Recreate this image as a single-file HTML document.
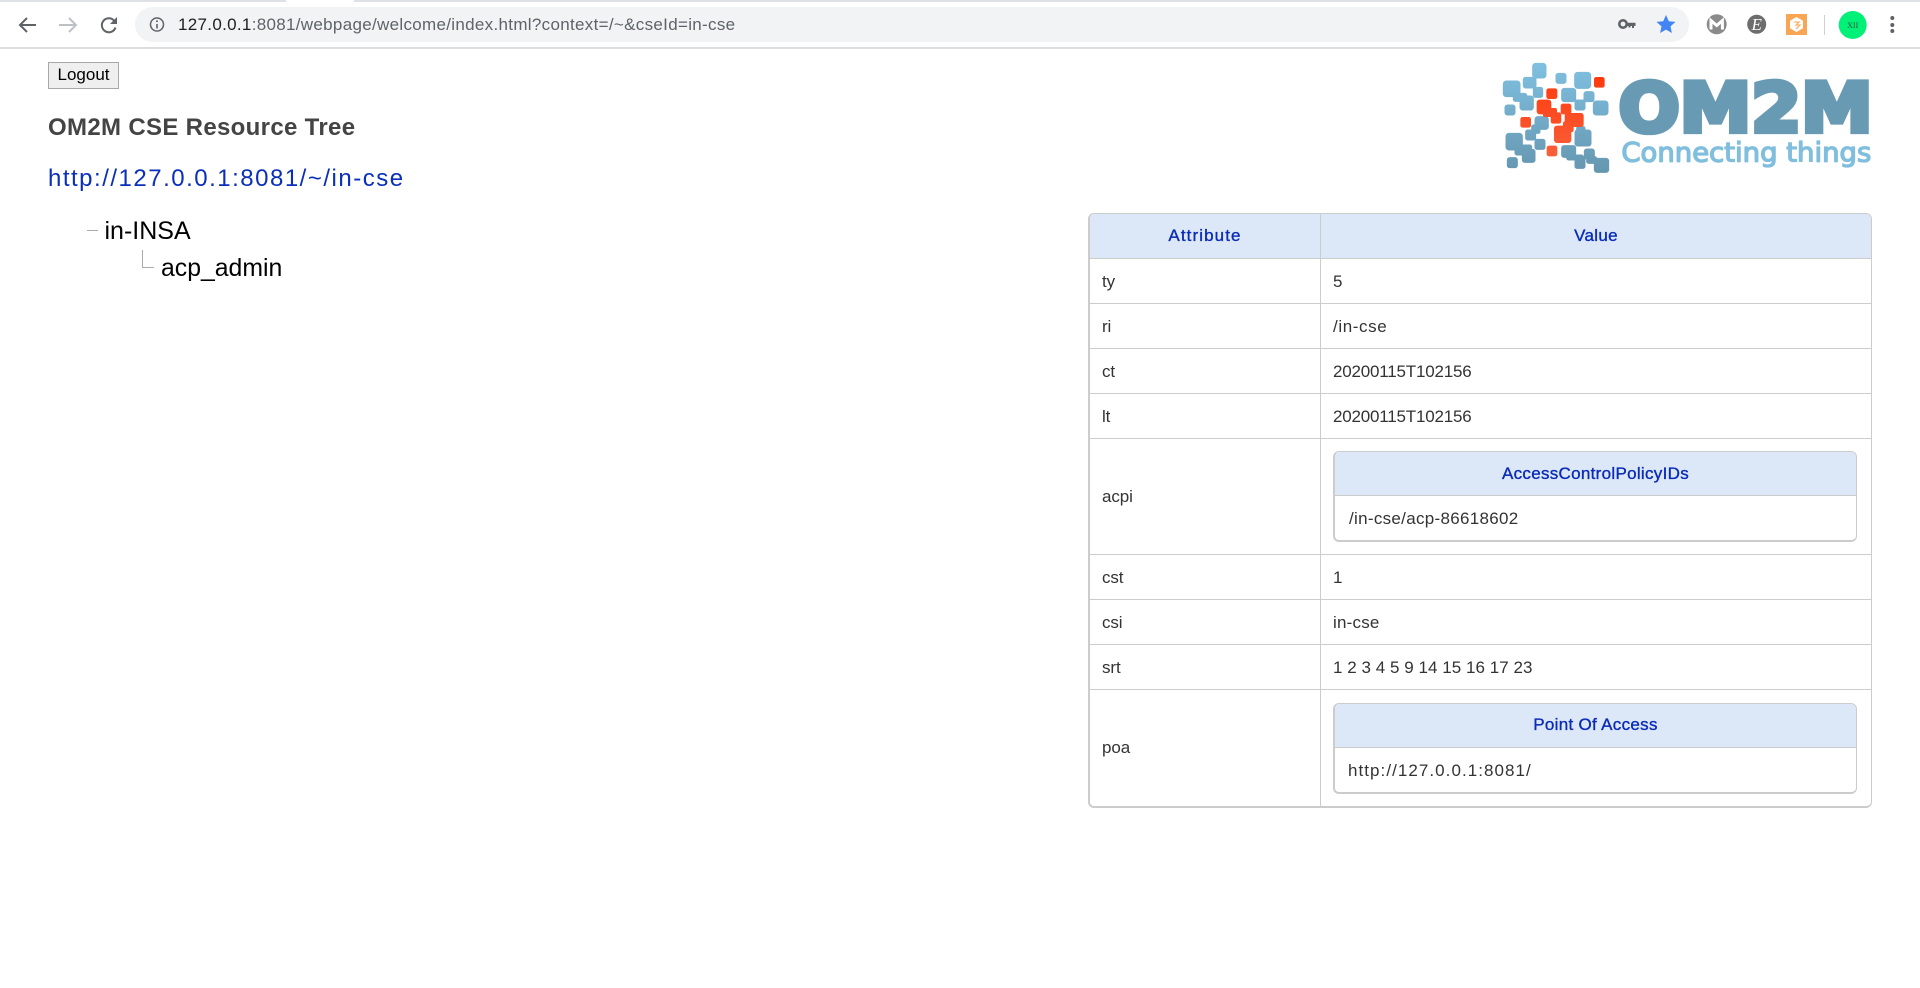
<!DOCTYPE html>
<html><head><meta charset="utf-8"><title>OM2M</title>
<style>
html,body{margin:0;padding:0;background:#fff;width:1920px;height:988px;overflow:hidden}
body{position:relative;font-family:"Liberation Sans",Arial,sans-serif;color:#333}
.a{position:absolute;white-space:nowrap}
#strip{left:0;top:0;width:1920px;height:2px;background:#dee1e6}
#tab{left:286px;top:0;width:68px;height:2px;background:#fff}
#line{left:0;top:47px;width:1920px;height:2px;background:#dcdde0}
#omni{left:135px;top:7px;width:1554px;height:35px;background:#f1f3f4;border-radius:18px}
#url{left:178px;top:15px;font-size:17px;line-height:20px;color:#5f6368;letter-spacing:.31px}
#url b{font-weight:normal;color:#202124}
#logout{left:48px;top:62px;width:71px;height:27px;box-sizing:border-box;background:#efefef;border:1px solid #a8a8a8;font:17px/22px "Liberation Sans",sans-serif;color:#000;padding:0 0 2px;text-align:center}
#h{left:48px;top:114px;font-size:24px;line-height:28px;font-weight:bold;color:#444;letter-spacing:.33px}
#lnk{left:48px;top:165px;font-size:24px;line-height:28px;color:#0a2fb8;text-decoration:none;letter-spacing:1.5px}
.tree{color:#000;font-size:25px;line-height:30px}
.t{border-collapse:separate;border-spacing:0;table-layout:fixed;background:#fff}
#tb{left:1088px;top:213px;width:784px;border:1px solid #ccc;border-left-width:2px;border-bottom-width:2px;border-right-width:1px;border-radius:6px}
.t td,.t th{box-sizing:border-box;height:45px;padding:2px 12px 0;font-size:17px;font-weight:normal;border-bottom:1px solid #ccc;border-right:1px solid #ccc;color:#333;letter-spacing:-.1px}
.t th{padding:0 12px;background:#dce8f8;color:#0a2bb8;text-align:center;-webkit-text-stroke:.35px #0a2bb8;letter-spacing:.3px}
.t td:last-child,.t th:last-child{border-right:0}
.t tr:last-child td{border-bottom:0}
.t th:first-child{border-top-left-radius:5px}
.t th:last-child{border-top-right-radius:5px}
.d{letter-spacing:-.2px!important}
.t td.big{height:116px;padding:0 14px 0 12px}
.t td.mid{padding-top:0}
.t .in{width:524px;border:1px solid #ccc;border-left-width:2px;border-bottom-width:2px;border-radius:6px}
.in th{height:44px;padding:0}
.in td{height:44px;padding:2px 0 0 13px}
</style></head>
<body>
<div class="a" id="strip"></div><div class="a" id="tab"></div><div class="a" id="line"></div>
<div class="a" id="omni"></div>

<svg class="a" style="left:0;top:0" width="200" height="48" viewBox="0 0 200 48" fill="none">
<path d="M36 25H20.5M27 18l-7 7 7 7" stroke="#5f6368" stroke-width="2"/>
<path d="M59 25h15.500M69 18l7 7-7 7" stroke="#bdc1c6" stroke-width="2"/>
<path d="M115.500 27.500A7 7 0 1 1 114 20.500" stroke="#5f6368" stroke-width="2"/>
<path d="M117 17v7h-7z" fill="#5f6368"/>
<circle cx="157" cy="24.500" r="6.500" stroke="#5f6368" stroke-width="1.500"/>
<path d="M157 24v4.500" stroke="#5f6368" stroke-width="1.600"/><circle cx="157" cy="21.300" r="1" fill="#5f6368"/>
</svg>
<div class="a" id="url"><b>127.0.0.1</b>:8081/webpage/welcome/index.html?context=/~&amp;cseId=in-cse</div>

<svg class="a" style="left:1600px;top:0" width="320" height="48" viewBox="0 0 320 48">
<circle cx="23" cy="24" r="3.700" fill="none" stroke="#5f6368" stroke-width="2.600"/>
<path d="M27 22.800h8.500v3.200h-1.500v2h-2v-2h-1.500v1.500h-2v-1.500h-2z" fill="#5f6368"/>
<path d="M66 15l2.800 6.200 6.700.7-5 4.500 1.400 6.600-5.900-3.400-5.900 3.400 1.400-6.600-5-4.500 6.700-.7z" fill="#4285f4"/>
<circle cx="116.700" cy="24.300" r="10" fill="#8a8a8a"/>
<path d="M111 29.500v-9l5.700 5 5.700-5v9" fill="none" stroke="#fff" stroke-width="3"/>
<circle cx="156.700" cy="24.300" r="9.500" fill="#6d6d6d"/>
<text x="156.700" y="30" font-family="Liberation Serif" font-style="italic" font-size="17" fill="#fff" text-anchor="middle">E</text>
<rect x="186" y="14" width="21" height="21" fill="#f9a654"/>
<path d="M196.500 17l6.500 3.800v7.400l-6.500 3.800-6.500-3.800v-7.400z" fill="#fff"/>
<path d="M194 22h5l-3 3h4l-4 4" fill="none" stroke="#f9b36d" stroke-width="1.300"/>
<rect x="224" y="15" width="1" height="20" fill="#d0d0d0"/>
<circle cx="252.700" cy="25" r="14" fill="#00f078"/>
<text x="252.700" y="28" font-family="Liberation Serif" font-size="8" fill="#2c5c3c" text-anchor="middle">XII</text>
<circle cx="292.300" cy="18" r="2" fill="#5f6368"/><circle cx="292.300" cy="25" r="2" fill="#5f6368"/><circle cx="292.300" cy="31" r="2" fill="#5f6368"/>
</svg>

<button class="a" id="logout">Logout</button>
<div class="a" id="h">OM2M CSE Resource Tree</div>
<a class="a" id="lnk">http://127.0.0.1:8081/~/in-cse</a>

<div class="a" style="left:87px;top:230px;width:11px;height:1px;background:#aaa"></div>
<div class="a tree" style="left:104.500px;top:216px;">in-INSA</div>
<div class="a" style="left:142px;top:250px;width:12px;height:18px;box-sizing:border-box;border-left:1px solid #aaa;border-bottom:1px solid #aaa"></div>
<div class="a tree" style="left:161px;top:254px;font-size:24.800px">acp_admin</div>

<svg class="a" style="left:1480px;top:0" width="440" height="190" viewBox="0 0 1320 570">
<defs><linearGradient id="g" gradientUnits="userSpaceOnUse" x1="0" y1="190" x2="0" y2="518"><stop offset="0" stop-color="#80c0e0"/><stop offset="1" stop-color="#6596b0"/></linearGradient>
<linearGradient id="r" gradientUnits="userSpaceOnUse" x1="0" y1="232" x2="0" y2="470"><stop offset="0" stop-color="#ff3a0e"/><stop offset="1" stop-color="#f9603a"/></linearGradient></defs>
<g fill="url(#g)" stroke="url(#g)" stroke-width="3">
<rect x="158" y="190" width="40" height="44" rx="9"/><rect x="130" y="232" width="38" height="32" rx="7"/><rect x="70" y="243" width="50" height="47" rx="9"/>
<rect x="160" y="262" width="28" height="30" rx="6"/><rect x="120" y="288" width="40" height="42" rx="8"/><rect x="100" y="280" width="40" height="24" rx="6"/>
<rect x="228" y="220" width="30" height="30" rx="7"/><rect x="284" y="217" width="48" height="48" rx="9"/><rect x="245" y="265" width="42" height="40" rx="8"/>
<rect x="312" y="275" width="30" height="30" rx="7"/><rect x="285" y="300" width="30" height="30" rx="6"/><rect x="340" y="303" width="44" height="42" rx="9"/>
<rect x="75" y="315" width="30" height="30" rx="7"/><rect x="165" y="350" width="40" height="38" rx="8"/><rect x="137" y="390" width="30" height="30" rx="6"/>
<rect x="78" y="400" width="49" height="50" rx="9"/><rect x="165" y="418" width="30" height="30" rx="6"/><rect x="127" y="448" width="38" height="39" rx="7"/>
<rect x="105" y="435" width="50" height="30" rx="6"/><rect x="82" y="473" width="30" height="30" rx="7"/><rect x="285" y="390" width="48" height="48" rx="8"/>
<rect x="245" y="437" width="42" height="35" rx="7"/><rect x="313" y="447" width="30" height="30" rx="7"/><rect x="285" y="470" width="30" height="35" rx="6"/>
<rect x="343" y="475" width="43" height="42" rx="8"/><rect x="260" y="465" width="50" height="15" rx="6"/><rect x="320" y="470" width="30" height="20" rx="6"/>
<rect x="155" y="375" width="25" height="25" rx="5"/><rect x="290" y="380" width="25" height="20" rx="5"/>
</g>
<g fill="url(#r)" stroke="url(#r)" stroke-width="2">
<rect x="343" y="232" width="30" height="30" rx="6"/><rect x="200" y="266" width="31" height="30" rx="6"/><rect x="171" y="300" width="42" height="42" rx="8"/>
<rect x="243" y="312" width="30" height="30" rx="6"/><rect x="213" y="338" width="30" height="32" rx="6"/><rect x="190" y="325" width="40" height="25" rx="5"/>
<rect x="255" y="340" width="55" height="40" rx="7"/><rect x="122" y="352" width="30" height="30" rx="6"/><rect x="223" y="378" width="50" height="50" rx="8"/>
<rect x="250" y="365" width="30" height="30" rx="5"/><rect x="201" y="438" width="30" height="30" rx="6"/>
</g>
<text x="416" y="394" font-family="DejaVu Sans" font-weight="bold" font-size="204" fill="#689ab4" stroke="#689ab4" stroke-width="16" stroke-linejoin="miter" textLength="762" lengthAdjust="spacingAndGlyphs">OM2M</text>
<text x="424" y="485" font-family="DejaVu Sans" font-size="80" fill="#80bedd" stroke="#80bedd" stroke-width="4" stroke-linejoin="round" textLength="750" lengthAdjust="spacingAndGlyphs">Connecting things</text>
</svg>

<table class="a t" id="tb">
<colgroup><col style="width:231px"><col></colgroup>
<tr><th style="letter-spacing:1.1px">Attribute</th><th>Value</th></tr>
<tr><td>ty</td><td>5</td></tr>
<tr><td>ri</td><td style="letter-spacing:.6px">/in-cse</td></tr>
<tr><td>ct</td><td class="d">20200115T102156</td></tr>
<tr><td>lt</td><td class="d">20200115T102156</td></tr>
<tr><td class="mid">acpi</td><td class="big">
 <table class="t in"><tr><th>AccessControlPolicyIDs</th></tr><tr><td style="letter-spacing:.3px;padding-left:14px">/in-cse/acp-86618602</td></tr></table>
</td></tr>
<tr><td>cst</td><td>1</td></tr>
<tr><td>csi</td><td style="letter-spacing:.2px">in-cse</td></tr>
<tr><td>srt</td><td style="letter-spacing:.04px">1 2 3 4 5 9 14 15 16 17 23</td></tr>
<tr><td class="mid">poa</td><td class="big">
 <table class="t in"><tr><th>Point Of Access</th></tr><tr><td style="letter-spacing:1.05px">http://127.0.0.1:8081/</td></tr></table>
</td></tr>
</table>
</body></html>
